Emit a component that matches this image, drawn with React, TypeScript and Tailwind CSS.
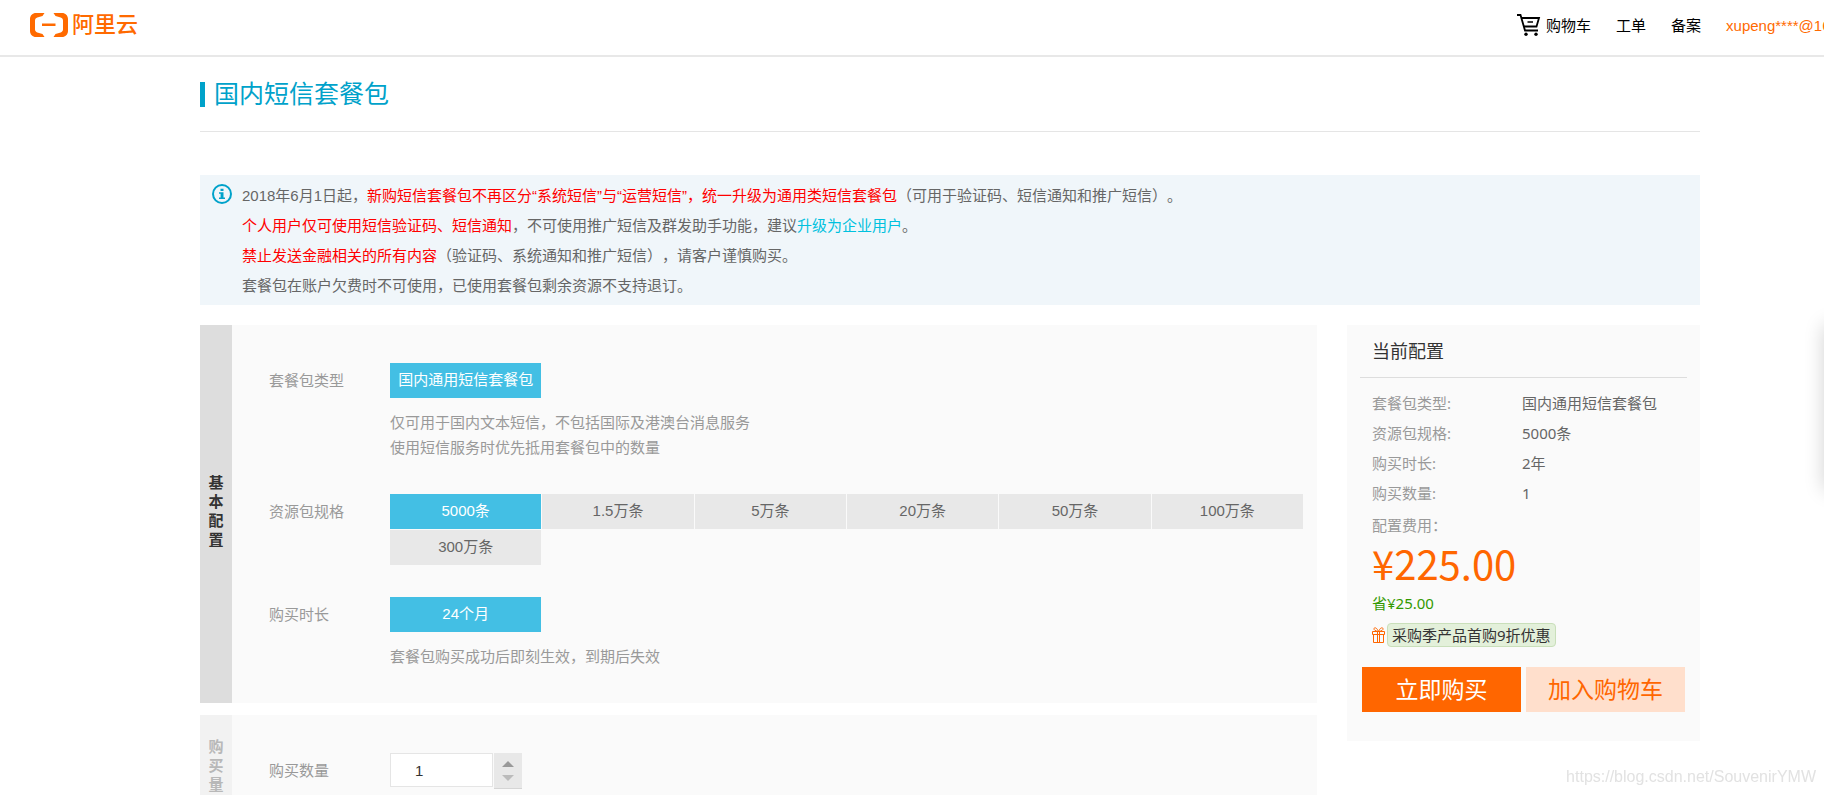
import { useState } from "react";

const packageSizes = ["5000条", "1.5万条", "5万条", "20万条", "50万条", "100万条", "300万条"];

const navLinks = ["工单", "备案"];

function Logo() {
  return (
    <a href="#" className="flex items-center gap-1 text-[#ff6a00]">
      <svg width="38" height="24" viewBox="0 0 38 24" fill="currentColor" aria-hidden="true">
        <path d="M14.500 0H6C2.600 0 0 2.600 0 6v12c0 3.400 2.600 6 6 6h8.500l-2-3-5.200-1.500C6 19.100 5 18 5 16.600V7.400C5 6 6 4.900 7.300 4.500L12.500 3z" />
        <path d="M23.500 0H32c3.400 0 6 2.600 6 6v12c0 3.400-2.600 6-6 6h-8.500l2-3 5.200-1.500c1.300-.4 2.300-1.500 2.300-2.900V7.400c0-1.400-1-2.500-2.300-2.900L25.500 3z" />
        <path d="M12 10.500h13.500V13H12z" />
      </svg>
      <span className="pt-px text-[22px] leading-6 font-medium">阿里云</span>
    </a>
  );
}

function CartIcon() {
  return (
    <svg width="24" height="22" viewBox="0 0 24 22" fill="none" stroke="currentColor" strokeWidth="1.800" className="-mt-1" aria-hidden="true">
      <path d="M0 1h3.500l4.500 15.500h13" />
      <path d="M4.500 4H22l-2.500 8.500H7" />
      <path d="M10.500 8h5.500" strokeWidth="1.500" />
      <circle cx="9" cy="20.200" r="1.700" fill="currentColor" stroke="none" />
      <circle cx="19" cy="20.200" r="1.700" fill="currentColor" stroke="none" />
    </svg>
  );
}

function InfoIcon() {
  return (
    <svg width="20" height="20" viewBox="0 0 20 20" fill="none" className="mt-[3px] shrink-0 text-[#00a2ca]" aria-hidden="true">
      <circle cx="10" cy="10" r="9" stroke="currentColor" strokeWidth="2" />
      <path d="M8.500 4.700h3v2.300h-3zM7 8.300h4.500v5.200H13V15H7v-1.500h1.600V9.800H7z" fill="currentColor" />
    </svg>
  );
}

function GiftIcon() {
  return (
    <svg width="14" height="16" viewBox="0 0 14 16" fill="none" stroke="#ff6600" aria-hidden="true">
      <path d="M.5 4.500h12v3H.5zM1.500 7.500h10v8h-10zM5.500 4.500v11M7.500 4.500v11" />
      <path d="M6.500 4.500C5 1 3 .2 2.200 1.200S2.500 4 6.500 4.500C10.500 4 11.700 2.200 10.800 1.200S8 1 6.500 4.500z" />
    </svg>
  );
}

function Option({ label, selected, onClick }: { label: string; selected: boolean; onClick?: () => void }) {
  return (
    <button
      type="button"
      aria-pressed={selected}
      onClick={onClick}
      className={`h-[35px] text-center whitespace-nowrap ${selected ? "bg-[#43bfe4] text-white" : "bg-[#e8e8e8] text-[#666]"}`}
    >
      {label}
    </button>
  );
}

function Section({ title, active, children }: { title: string; active?: boolean; children: React.ReactNode }) {
  return (
    <section className="flex bg-[#fafafa]">
      <h2
        className={`flex w-8 shrink-0 flex-col items-center justify-center pb-1.5 leading-[19px] font-bold ${active ? "bg-[#ddd] text-[#333]" : "bg-[#f2f2f2] text-[#b8b8b8]"}`}
      >
        {title.split("").map((char) => (
          <span key={char}>{char}</span>
        ))}
      </h2>
      <div className="flex flex-1 flex-col gap-8 pt-[38px] pr-3.5 pb-8 pl-[37px]">{children}</div>
    </section>
  );
}

function Row({ label, children }: { label: React.ReactNode; children: React.ReactNode }) {
  return (
    <div className="flex">
      <div className="w-[121px] shrink-0 leading-[35px] text-[#999]">{label}</div>
      <div className="flex-1">{children}</div>
    </div>
  );
}

export default function App() {
  const [size, setSize] = useState("5000条");
  const [count, setCount] = useState(1);

  const summary = [
    ["套餐包类型:", "国内通用短信套餐包"],
    ["资源包规格:", size],
    ["购买时长:", "2年"],
    ["购买数量:", String(count)],
  ];

  return (
    <div className="relative min-h-screen overflow-hidden bg-white font-['Liberation_Sans','Noto_Sans_CJK_SC',sans-serif] text-[15px] text-[#666] [text-spacing-trim:space-all]">
      <header className="flex h-[57px] justify-between overflow-hidden border-b-2 border-[#e8e8e8] pl-[30px]">
        <div className="pt-3">
          <Logo />
        </div>
        <nav className="flex h-[53px] w-[307px] shrink-0 items-center gap-[25px] whitespace-nowrap text-black">
          <a href="#" className="flex items-center gap-[5px]">
            <CartIcon />
            购物车
          </a>
          {navLinks.map((link) => (
            <a key={link} href="#">
              {link}
            </a>
          ))}
          <a href="#" className="text-[#ff6a00]">
            xupeng****@163.com
          </a>
        </nav>
      </header>

      <main className="mr-[124px] ml-[200px]">
        <div className="border-b border-[#e5e5e5] pt-[25px] pb-6">
          <h1 className="border-l-5 border-[#00a2ca] pl-[9px] text-[25px] leading-[25px] text-[#00a2ca]">
            国内短信套餐包
          </h1>
        </div>

        {/* Notice */}
        <div className="mt-[43px] flex gap-2.5 bg-[#f0f6fa] pt-1.5 pb-1 pl-3">
          <InfoIcon />
          <div className="leading-[30px]">
            <p>
              2018年6月1日起，
              <span className="text-[#f00]">
                新购短信套餐包不再区分“系统短信”与“运营短信”，统一升级为通用类短信套餐包
              </span>
              （可用于验证码、短信通知和推广短信）。
            </p>
            <p>
              <span className="text-[#f00]">个人用户仅可使用短信验证码、短信通知</span>
              ，不可使用推广短信及群发助手功能，建议
              <a href="#" className="text-[#00c1de]">
                升级为企业用户
              </a>
              。
            </p>
            <p>
              <span className="text-[#f00]">禁止发送金融相关的所有内容</span>
              （验证码、系统通知和推广短信），请客户谨慎购买。
            </p>
            <p>套餐包在账户欠费时不可使用，已使用套餐包剩余资源不支持退订。</p>
          </div>
        </div>

        <div className="mt-5 flex items-start gap-[30px]">
          <div className="flex flex-1 flex-col gap-3">
            <Section title="基本配置" active>
              <Row label="套餐包类型">
                <div className="grid grid-cols-6 gap-px">
                  <Option label="国内通用短信套餐包" selected />
                </div>
                <p className="mt-3 pb-0.5 leading-[25px] text-[#999]">
                  仅可用于国内文本短信，不包括国际及港澳台消息服务
                  <br />
                  使用短信服务时优先抵用套餐包中的数量
                </p>
              </Row>
              <Row label="资源包规格">
                <div className="grid grid-cols-6 gap-px">
                  {packageSizes.map((item) => (
                    <Option key={item} label={item} selected={item === size} onClick={() => setSize(item)} />
                  ))}
                </div>
              </Row>
              <Row label="购买时长">
                <div className="grid grid-cols-6 gap-px">
                  <Option label="24个月" selected />
                </div>
                <p className="mt-3 pb-0.5 leading-[25px] text-[#999]">套餐包购买成功后即刻生效，到期后失效</p>
              </Row>
            </Section>

            <Section title="购买量">
              <Row label={<label htmlFor="count">购买数量</label>}>
                <div className="flex items-start gap-px">
                  <input
                    id="count"
                    type="text"
                    value={count}
                    onChange={(e) => setCount(Number(e.target.value) || 1)}
                    className="h-[34px] w-[103px] border border-[#e5e5e5] bg-white pl-6 text-[#333]"
                  />
                  <div className="flex h-9 w-7 flex-col border-b border-[#d5d5d5] bg-[#e8e8e8]">
                    <button
                      type="button"
                      aria-label="增加"
                      onClick={() => setCount(count + 1)}
                      className="flex flex-1 items-end justify-center pb-1"
                    >
                      <svg width="12" height="6" viewBox="0 0 12 6" fill="#999">
                        <path d="M6 0l6 6H0z" />
                      </svg>
                    </button>
                    <button
                      type="button"
                      aria-label="减少"
                      onClick={() => setCount(Math.max(1, count - 1))}
                      className="flex flex-1 items-start justify-center pt-1"
                    >
                      <svg width="12" height="6" viewBox="0 0 12 6" fill="#bbb">
                        <path d="M6 6L0 0h12z" />
                      </svg>
                    </button>
                  </div>
                </div>
              </Row>
            </Section>
          </div>

          {/* Order summary */}
          <aside className="w-[353px] shrink-0 bg-[#fafafa] px-[13px] pb-[29px] font-['Noto_Sans','Noto_Sans_CJK_SC',sans-serif]">
            <h2 className="border-b border-[#ddd] px-3 text-[18px] leading-[52px] text-[#333]">当前配置</h2>
            <dl className="mt-2.5 px-3 leading-[30px]">
              {summary.map(([name, value]) => (
                <div key={name} className="flex">
                  <dt className="w-[150px] text-[#999]">{name}</dt>
                  <dd>{value}</dd>
                </div>
              ))}
            </dl>
            <div className="px-3">
              <p className="leading-[34px] text-[#999]">配置费用：</p>
              <p className="mb-1 font-['Noto_Sans_CJK_SC',sans-serif] text-[40px] leading-[42px] text-[#ff6600]">¥225.00</p>
              <p className="leading-[30px] text-[#390]">省¥25.00</p>
              <p className="mt-[5px] flex items-center gap-px">
                <GiftIcon />
                <span className="rounded border border-[#c9dfba] bg-[#e3f0da] px-1 leading-[22px] text-[#333]">
                  采购季产品首购9折优惠
                </span>
              </p>
            </div>
            <div className="mt-5 flex gap-[5px] px-0.5 text-[23px] leading-[45px]">
              <button type="button" className="flex-1 bg-[#ff6600] text-white">
                立即购买
              </button>
              <button type="button" className="flex-1 bg-[#ffdfcc] text-[#ff6600]">
                加入购物车
              </button>
            </div>
          </aside>
        </div>
      </main>

      {/* Collapsed side drawer, only its shadow reaches the page */}
      <div className="fixed top-[325px] left-full h-[165px] w-10 bg-white shadow-[0_0_20px_rgba(0,0,0,0.18)]" />

      <p className="fixed right-2 bottom-1.5 font-['Liberation_Sans',sans-serif] text-[16px] leading-6 text-[#e2e2e2]">
        https://blog.csdn.net/SouvenirYMW
      </p>
    </div>
  );
}
